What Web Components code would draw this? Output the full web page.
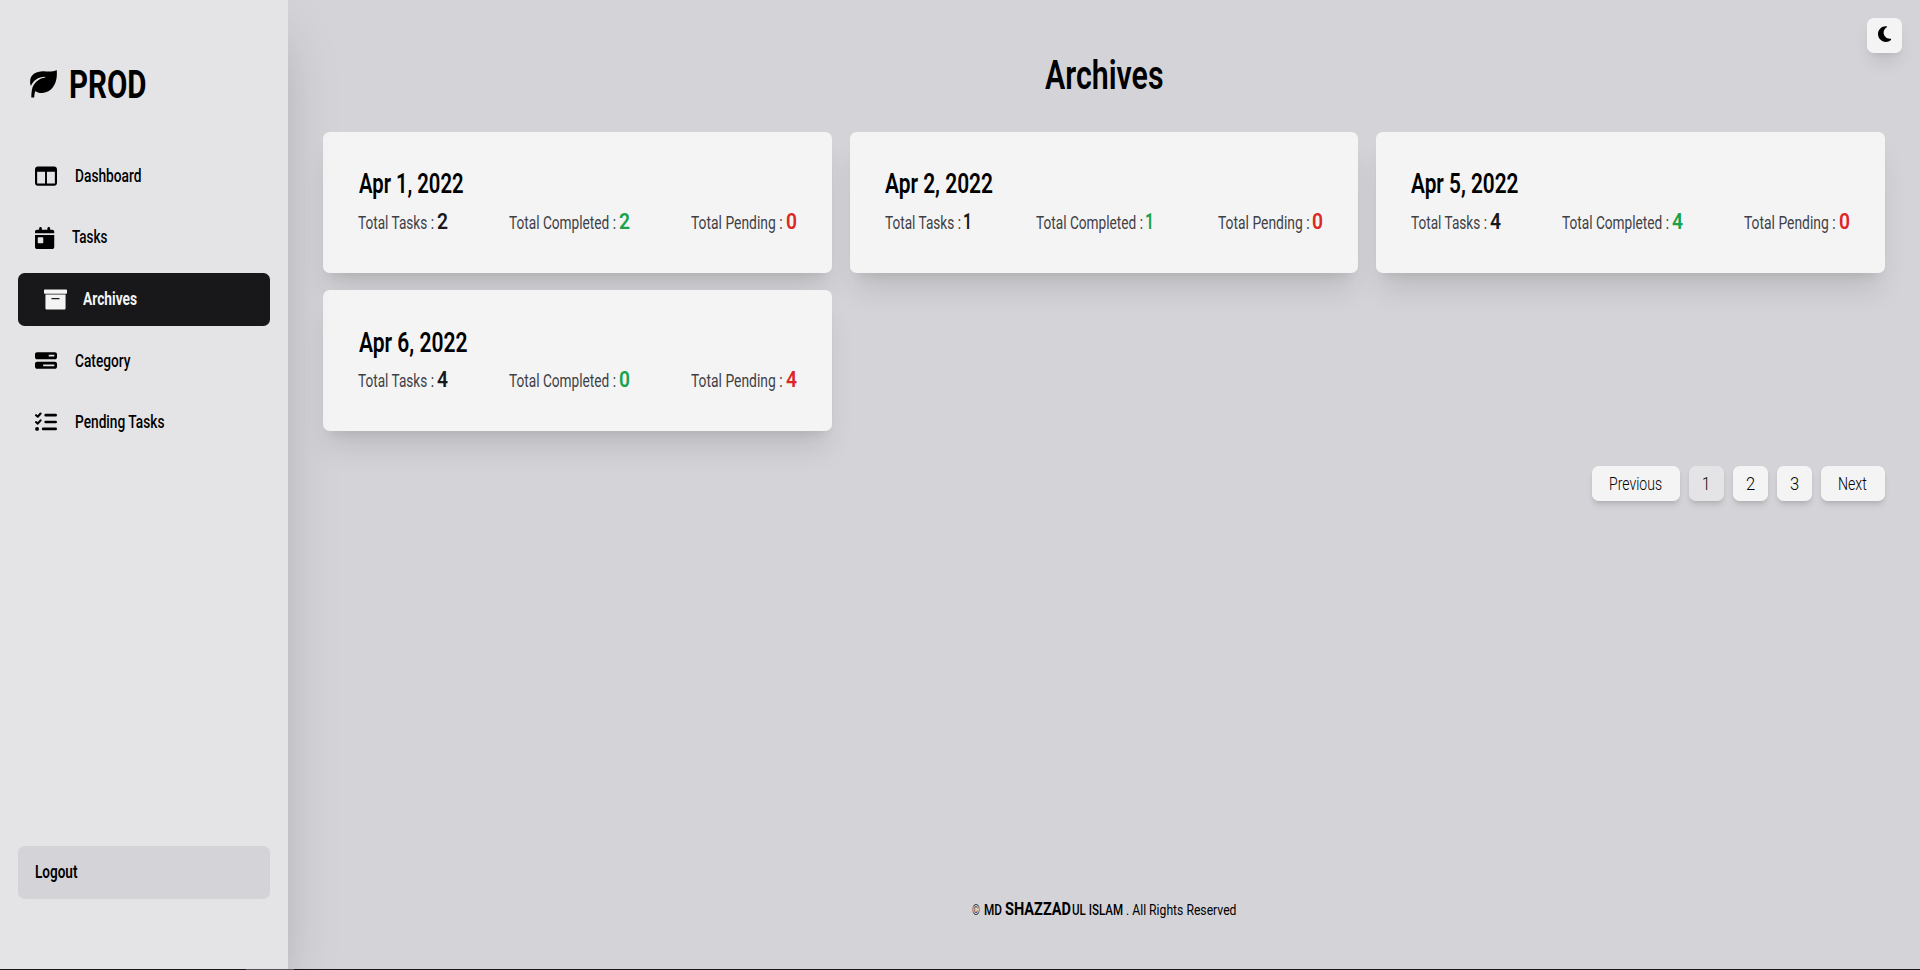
<!DOCTYPE html>
<html lang="en">
<head>
<meta charset="utf-8">
<title>Archives</title>
<style>
html{font-size:17.6px}
body{margin:0;height:970px;overflow:hidden;background:#d4d4d8;color:#000;font-family:Roboto,"Liberation Sans",sans-serif}
</style>
</head>
<body>
<prod-app></prod-app>
<script>
const define = (name, html, setup) => customElements.define(name, class extends HTMLElement {
  connectedCallback() {
    if (this.shadowRoot) return;
    const root = this.attachShadow({mode: 'open'});
    const t = document.createElement('template');
    t.innerHTML = typeof html === 'function' ? html(this) : html;
    root.append(t.content.cloneNode(true));
    if (setup) setup(this, root);
  }
});

/* Condensed label: squeezes its text horizontally to the width in "w". */
define('fit-text', `<style>
:host{display:inline-block;white-space:nowrap}
span{display:inline-block;transform-origin:0 50%}
</style><span><slot></slot></span>`, (el, root) => {
  const w = parseFloat(el.getAttribute('w'));
  const span = root.querySelector('span');
  const natural = span.getBoundingClientRect().width;
  span.style.width = natural + 'px';
  span.style.marginRight = (w - natural) + 'px';
  span.style.transform = `scaleX(${w / natural})`;
  el.style.width = w + 'px';
});

const ICONS = {
  columns: [512, '<path d="M0 96C0 60.7 28.7 32 64 32H448c35.3 0 64 28.7 64 64V416c0 35.3-28.7 64-64 64H64c-35.3 0-64-28.7-64-64V96zm50 60V430H234V156zm412 0H278V430H462V156z"/>'],
  calendar: [448, '<path d="M128 0c17.7 0 32 14.3 32 32V64H288V32c0-17.7 14.3-32 32-32s32 14.3 32 32V64h48c26.5 0 48 21.5 48 48v32H0V112C0 85.5 21.5 64 48 64H96V32c0-17.7 14.3-32 32-32zM0 184H448V464c0 26.5-21.5 48-48 48H48c-26.5 0-48-21.5-48-48V184zm80 54c-8.8 0-16 7.2-16 16v106c0 8.8 7.2 16 16 16h96c8.8 0 16-7.2 16-16V254c0-8.8-7.2-16-16-16H80z"/>'],
  archive: [512, '<path d="M16 32H496c9 0 16 7 16 16v64c0 9-7 16-16 16H16c-9 0-16-7-16-16V48c0-9 7-16 16-16zM32 142H480V448c0 17.700-14.300 32-32 32H64c-17.700 0-32-14.300-32-32V142zm144 82c-8.800 0-12 4-12 13s3.200 13 12 13H336c8.800 0 12-4 12-13s-3.200-13-12-13H176z"/>'],
  bars: [512, '<path fill-rule="evenodd" d="M48 50H464c26.500 0 48 21.500 48 48v68c0 26.500-21.500 48-48 48H48c-26.500 0-48-21.500-48-48V98C0 71.500 21.500 50 48 50zM320 112v40H450V112zM48 274H464c26.500 0 48 21.500 48 48v68c0 26.500-21.500 48-48 48H48c-26.500 0-48-21.500-48-48V322c0-26.500 21.500-48 48-48zM190 338v40H450V338z"/>'],
  list: [512, '<path fill="none" stroke="currentColor" stroke-width="48" stroke-linecap="round" stroke-linejoin="round" d="M24 98l40 36L130 58M24 258l40 36L130 218"/><path fill="none" stroke="currentColor" stroke-width="60" stroke-linecap="round" d="M248 96H482M248 256H482M188 416H482"/><circle cx="48" cy="416" r="46"/>'],
  moon: [384, '<path d="M223.500 32C100 32 0 132.300 0 256S100 480 223.500 480c60.600 0 115.500-24.200 155.800-63.400c5-4.900 6.300-12.500 3.100-18.700s-10.100-9.700-17-8.500c-9.800 1.700-19.800 2.600-30.100 2.600c-96.900 0-175.500-78.800-175.500-176c0-65.800 36-123.100 89.300-153.300c6.100-3.500 9.200-10.500 7.700-17.300s-7.300-11.900-14.300-12.500c-6.300-.5-12.600-.8-19-.8z"/>']
};
define('app-icon', el => {
  const [w, shape] = ICONS[el.getAttribute('name')];
  return `<style>:host{display:block;flex:none}svg{display:block;height:var(--icon,22px);fill:currentColor}</style><svg viewBox="0 0 ${w} 512" style="width:calc(var(--icon,22px)*${w / 512})">${shape}</svg>`;
});

define('app-logo', `<style>
:host{display:flex;align-items:center;gap:11.800px;padding-left:30px;height:44px;font-weight:700;font-size:39.600px;line-height:44px}
svg{display:block}
fit-text{margin-top:1.500px}
</style>
<svg width="27" height="28" viewBox="0 0 27 28"><path d="M26.700 0C24 1.500 19 2 14 1.300C6 1 .5 5 .2 10.500C0 13 .2 14.500 .9 16C3 10.800 8 6.800 15.200 6.700v.8C8.500 8.500 4 13 2.300 18C1.600 21 1.300 24 1.300 27.500H4.200C4.300 24.500 4.700 22.700 5.500 21C8 23.300 12.500 23.600 16.500 22C24 19 27.800 11 26.700 0z"/></svg>
<fit-text w="77.500">PROD</fit-text>`);

define('nav-item', el => `<style>
:host{display:flex;align-items:center;gap:17.500px;height:52.800px;padding-left:17.400px;border-radius:6.600px;font-weight:500;font-size:17.600px;line-height:26.400px}
:host([active]){background:#18181b;color:#f4f4f5;padding-left:25.500px;gap:16.800px;font-weight:700;--icon:23px}
</style><app-icon name="${el.getAttribute('icon')}"></app-icon><fit-text w="${el.getAttribute('w')}">${el.getAttribute('label')}</fit-text>`);

define('logout-button', `<style>
:host{display:block;box-sizing:border-box;height:52.800px;padding:13.200px 17.200px;border-radius:6.600px;background:#d4d4d8;font-weight:600;font-size:17.600px;line-height:26.400px}
</style><fit-text w="42.5">Logout</fit-text>`);

define('side-bar', `<style>
:host{display:flex;flex-direction:column;box-sizing:border-box;width:288px;height:970px;padding:62px 18px 71.500px;background:#e4e4e7;box-shadow:0 27.500px 55px -13.200px rgb(0 0 0/.25);position:relative;z-index:1}
app-logo{margin-left:-18px}
nav{display:flex;flex-direction:column;gap:8.800px;margin-top:43.700px}
logout-button{margin-top:auto}
</style>
<app-logo></app-logo>
<nav>
<nav-item icon="columns" label="Dashboard" w="66.5"></nav-item>
<nav-item icon="calendar" label="Tasks" w="35.5"></nav-item>
<nav-item active icon="archive" label="Archives" w="54"></nav-item>
<nav-item icon="bars" label="Category" w="55.5"></nav-item>
<nav-item icon="list" label="Pending Tasks" w="89.5"></nav-item>
</nav>
<logout-button></logout-button>`);

define('stat-item', el => {
  const n = el.getAttribute('value');
  return `<style>
:host{display:flex;align-items:baseline;gap:3px;line-height:30.800px}
.label{font-size:17.600px;font-weight:400;color:#3f3f46}
.num{font-size:22px;font-weight:600;color:var(--tone,#18181b)}
.one{margin-left:-1px}
</style><fit-text class="label" w="${el.getAttribute('w')}">${el.getAttribute('label')} :</fit-text><fit-text class="num${n === '1' ? ' one' : ''}" w="${n === '1' ? 9 : 11}">${n}</fit-text>`;
});

define('archive-card', el => {
  const g = k => el.getAttribute(k);
  return `<style>
:host{display:block;box-sizing:border-box;height:140.800px;padding:35.200px;border-radius:6.600px;background:#f4f4f5;box-shadow:0 22px 27.500px -5.500px rgb(0 0 0/.1),0 8.800px 11px -6.600px rgb(0 0 0/.1)}
h2{margin:0 0 0 .3px;font-size:26.800px;line-height:35.200px;height:35.200px;font-weight:600}
.stats{display:flex;justify-content:space-between;margin-top:4.700px}
.done{--tone:#16a34a}.pending{--tone:#dc2626}
</style>
<h2><fit-text w="${g('w')}">${g('date')}</fit-text></h2>
<div class="stats">
<stat-item label="Total Tasks" w="76" value="${g('total')}"></stat-item>
<stat-item class="done" label="Total Completed" w="107" value="${g('done')}"></stat-item>
<stat-item class="pending" label="Total Pending" w="91.500" value="${g('pending')}"></stat-item>
</div>`;
});

define('page-button', el => `<style>
:host{display:block;box-sizing:border-box;height:35.200px;padding:1px ${el.getAttribute('pad') || 17.6}px 0;border-radius:6.600px;background:#f4f4f5;box-shadow:0 4.400px 6.600px -1px rgb(0 0 0/.1),0 2.200px 4.400px -2px rgb(0 0 0/.1);color:#000;font-weight:300;font-size:17.600px;line-height:34.200px}
:host([current]){background:#e4e4e7}
</style><fit-text w="${el.getAttribute('w')}">${el.getAttribute('label')}</fit-text>`);

define('page-nav', `<style>
:host{display:flex;justify-content:flex-end;gap:8.800px;margin-top:35px}
</style>
<page-button label="Previous" w="53"></page-button>
<page-button current label="1" w="8.2" pad="13.5"></page-button>
<page-button label="2" w="9.2" pad="13"></page-button>
<page-button label="3" w="9.2" pad="13"></page-button>
<page-button label="Next" w="28.8"></page-button>`);

define('theme-toggle', `<style>
:host{display:flex;align-items:center;justify-content:center;box-sizing:border-box;width:35.200px;height:35.200px;padding:0 .5px 2px 0;border-radius:6.600px;background:#f4f4f5;box-shadow:0 11px 16.500px -3.300px rgb(0 0 0/.1),0 4.400px 6.600px -4.400px rgb(0 0 0/.1);--icon:18px;position:absolute;top:17.800px;right:17.800px}
</style><app-icon name="moon"></app-icon>`);

define('page-footer', `<style>
:host{display:flex;justify-content:center;align-items:baseline;margin-top:auto;font-size:15.400px;line-height:24px;font-weight:400}
.c{margin-right:3.500px;font-weight:300}.md{margin-right:3px}.name{font-size:18px;font-weight:700;margin-right:1px}.isl{margin-right:3px}
.md,.isl{font-weight:500}
</style><fit-text class="c" w="8">©</fit-text><fit-text class="md" w="18">MD</fit-text><fit-text class="name" w="66">SHAZZAD</fit-text><fit-text class="isl" w="51">UL ISLAM</fit-text><fit-text w="110.5">. All Rights Reserved</fit-text>`);

define('prod-app', `<style>
:host{display:flex;height:970px;position:relative}
main{flex:1;display:flex;flex-direction:column;box-sizing:border-box;height:970px;padding:53.800px 35.200px 48.500px}
h1{margin:0 0 34.200px;text-align:center;font-size:40px;line-height:44px;height:44px;font-weight:600}
.grid{display:grid;grid-template-columns:repeat(3,1fr);gap:17.600px}
.edge{position:absolute;left:0;right:0;bottom:0;height:1px;background:linear-gradient(90deg,#18181b 246px,#52525b 246px 294px,#18181b 294px);z-index:2}
</style>
<side-bar></side-bar>
<main>
<h1><fit-text w="118.5">Archives</fit-text></h1>
<div class="grid">
<archive-card date="Apr 1, 2022" w="104.5" total="2" done="2" pending="0"></archive-card>
<archive-card date="Apr 2, 2022" w="108" total="1" done="1" pending="0"></archive-card>
<archive-card date="Apr 5, 2022" w="107.5" total="4" done="4" pending="0"></archive-card>
<archive-card date="Apr 6, 2022" w="108.5" total="4" done="0" pending="4"></archive-card>
</div>
<page-nav></page-nav>
<page-footer></page-footer>
</main>
<theme-toggle></theme-toggle>
<div class="edge"></div>`);
</script>
</body>
</html>
